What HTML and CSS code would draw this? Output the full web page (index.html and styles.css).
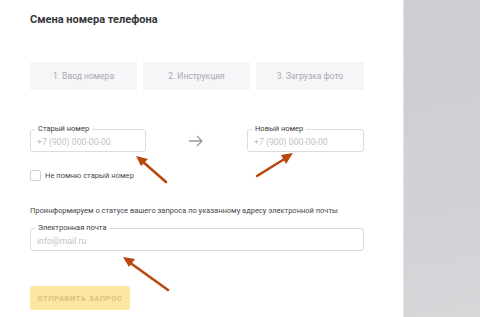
FILE: index.html
```html
<!DOCTYPE html>
<html lang="ru">
<head>
    <meta charset="UTF-8">
    <title>Смена номера телефона</title>
    <link rel="stylesheet" href="styles.css">
</head>
<body>
<div class="page">
    <div class="main">
        <h1 class="title">Смена номера телефона</h1>

        <ul class="steps">
            <li>1. Ввод номера</li>
            <li>2. Инструкция</li>
            <li>3. Загрузка фото</li>
        </ul>

        <div class="phones">
            <div class="field">
                <span class="field-label">Старый номер</span>
                <input type="text" placeholder="+7 (900) 000-00-00">
            </div>
            <div class="arrow">
                <svg width="16" height="12" viewBox="0 0 16 12"><path d="M1 6h13M9 1l5 5-5 5" fill="none" stroke="#9a9a9a" stroke-width="1.3"/></svg>
            </div>
            <div class="field">
                <span class="field-label">Новый номер</span>
                <input type="text" placeholder="+7 (900) 000-00-00">
            </div>
        </div>

        <label class="check">
            <span class="box"></span>
            Не помню старый номер
        </label>

        <p class="info">Проинформируем о статусе вашего запроса по указанному адресу электронной почты</p>

        <div class="field">
            <span class="field-label">Электронная почта</span>
            <input type="text" placeholder="info@mail.ru">
        </div>

        <button class="send">Отправить запрос</button>
    </div>
    <div class="side"></div>
</div>

<!-- стрелки поверх скриншота -->
<svg class="marks" width="480" height="317" viewBox="0 0 480 317">
    <g stroke="#b9470f" stroke-width="2.6" stroke-linecap="round" fill="#b9470f">
        <line x1="166" y1="182" x2="142" y2="161"/>
        <line x1="257" y1="176" x2="286" y2="158"/>
        <line x1="168" y1="290" x2="129" y2="262"/>
    </g>
    <g fill="#b9470f">
        <polygon points="136,156 148,159 141,166"/>
        <polygon points="293,153 286,164 281,155"/>
        <polygon points="123,257 135,259 129,267"/>
    </g>
</svg>
</body>
</html>
```

FILE: styles.css
```css
* { margin: 0; padding: 0; box-sizing: border-box; }
li { list-style: none; }
body { font-family: Roboto, "Noto Sans", Arial, sans-serif; background: #fff; overflow: hidden; }

.page { display: flex; height: 317px; }
.main { width: 403px; padding: 12px 0 0 30px; }
.side { flex: 1; background: linear-gradient(170deg, #cdced1 0%, #d0d1d4 60%, #d6d7d9 100%); border-left: 1px solid #e2e2e4; }

.title { font-size: 11px; line-height: 16px; font-weight: 700; color: #35363a; }

/*шаги*/
.steps { display: grid; grid-template-columns: 107px 107px 108px; gap: 6px; margin-top: 34px; width: 334px; }
.steps li { height: 28px; line-height: 28px; background: #f6f6f9; text-align: center; font-size: 8.5px; color: #a9a9ae; }

/*поля*/
.phones { display: grid; grid-template-columns: 116px 1fr 117px; margin-top: 39px; width: 334px; }
.arrow { display: flex; justify-content: center; align-items: center; padding-right: 2px; }
.field { position: relative; height: 23px; border: 1px solid #dcdcdf; border-radius: 3px; }
.field-label { position: absolute; top: -6px; left: 4px; padding: 0 3px; background: #fff; font-size: 7.5px; line-height: 10px; color: #3c3c40; }
.field input { width: 100%; height: 100%; border: 0; outline: 0; padding: 1px 0 0 6px; font-family: inherit; font-size: 8.7px; background: transparent; }
.field input::placeholder { color: #c2c2c6; }

.check { display: flex; align-items: center; gap: 4px; margin-top: 18px; height: 11px; font-size: 7.6px; color: #4a4a4e; }
.check .box { width: 11px; height: 11px; border: 1px solid #cfcfd3; border-radius: 2px; }

.info { margin-top: 24px; font-size: 7.5px; line-height: 12px; color: #46464a; }
.info + .field { margin-top: 11px; width: 334px; }

.send { display: block; margin-top: 35px; width: 100px; height: 24px; border: 0; border-radius: 3px; background: #fce7a1; color: #d7c27f; font-family: inherit; font-size: 7.4px; font-weight: 700; letter-spacing: 0.7px; text-transform: uppercase; }

.marks { position: absolute; left: 0; top: 0; pointer-events: none; }
```
